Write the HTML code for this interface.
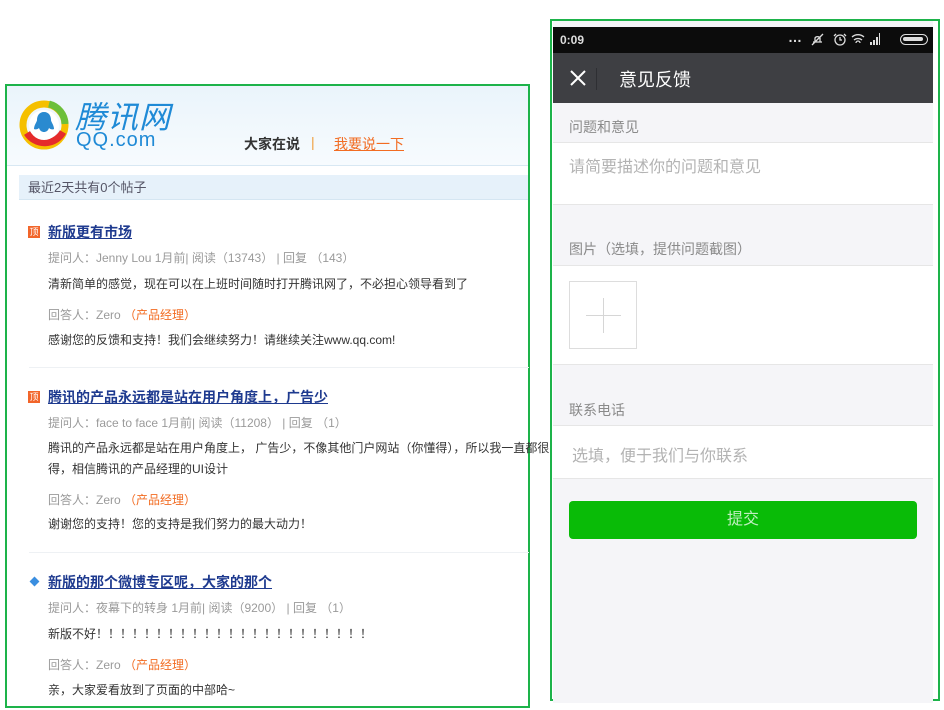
<!DOCTYPE html>
<html><head><meta charset="utf-8"><style>
*{margin:0;padding:0;box-sizing:border-box}
body{width:944px;height:710px;background:#fff;position:relative;overflow:hidden;font-family:"Liberation Sans","Noto Sans CJK SC",sans-serif;}
.abs{position:absolute;white-space:nowrap}
#left{position:absolute;left:5px;top:84px;width:525px;height:624px;border:2px solid #1db34a;background:#fff}
.hdr{position:absolute;left:0;top:0;width:521px;height:80px;background:linear-gradient(180deg,#eaf4fb,#f7fbfe);border-bottom:1px solid #d8e8f3}
.t{font-size:14px;font-weight:bold;color:#1e3a8f;text-decoration:underline}
.m{font-size:12px;color:#9a9a9a}
.c{font-size:12px;color:#333}
.o{color:#f26c22}
.tag{position:absolute;width:12px;height:12px;background:#f2652a;color:#fff;font-size:9px;line-height:12px;text-align:center}
.sep{position:absolute;left:22px;width:500px;height:1px;background:#eef1f4}
#right{position:absolute;left:550px;top:19px;width:390px;height:682px;border:2px solid #1db34a;background:#fff}
.ph{position:absolute;left:1px;width:380px}
.lbl{font-size:14px;color:#8a8a8a}
.ph2{font-size:16px;color:#b3b3b3}
</style></head><body>
<div id="left">
 <div class="hdr"></div>
 <svg class="abs" style="left:12px;top:14px" width="50" height="50" viewBox="0 0 50 50">
  <circle cx="25" cy="25" r="21" fill="none" stroke="#f5c000" stroke-width="7"/>
  <path d="M8 33 A21 21 0 0 0 44 32" fill="none" stroke="#e52b2b" stroke-width="7"/>
  <path d="M30 4 A21 21 0 0 1 46 24" fill="none" stroke="#6cbf3a" stroke-width="7"/>
  <circle cx="25" cy="25" r="15" fill="#fff"/>
  <path d="M25 12c-5 0-7 4-7 8 0 2-3 5-3 9 2 1 4 0 5-1 1 3 3 4 5 4s4-1 5-4c1 1 3 2 5 1 0-4-3-7-3-9 0-4-2-8-7-8z" fill="#2a8ad0"/>
 </svg>
 <div class="abs" style="left:68px;top:16px;font-size:31px;line-height:1;font-style:italic;color:#1f8ad6;letter-spacing:1px">腾讯网</div>
 <div class="abs" style="left:69px;top:44px;font-size:20px;line-height:1;color:#1f8ad6;letter-spacing:1px">QQ.com</div>
 <div class="abs" style="left:237px;top:48px;font-size:14px;font-weight:bold;color:#333">大家在说</div>
 <div class="abs" style="left:304px;top:48px;font-size:14px;color:#f0a040">|</div>
 <div class="abs" style="left:327px;top:48px;font-size:14px;color:#f26c22;text-decoration:underline">我要说一下</div>
 <div class="abs" style="left:12px;top:89px;width:509px;height:25px;background:#e6f1fa;border-bottom:1px solid #d5e6f2;font-size:13px;color:#556;line-height:25px;padding-left:9px">最近2天共有0个帖子</div>

 <div class="tag" style="left:21px;top:140px">顶</div>
 <div class="abs t" style="left:41px;top:136px">新版更有市场</div>
 <div class="abs m" style="left:41px;top:163px">提问人：Jenny Lou 1月前| 阅读（13743） | 回复 （143）</div>
 <div class="abs c" style="left:41px;top:189px">清新简单的感觉，现在可以在上班时间随时打开腾讯网了，不必担心领导看到了</div>
 <div class="abs m" style="left:41px;top:220px">回答人：Zero <span class="o">（产品经理）</span></div>
 <div class="abs c" style="left:41px;top:245px">感谢您的反馈和支持！我们会继续努力！请继续关注www.qq.com!</div>
 <div class="sep" style="top:281px"></div>

 <div class="tag" style="left:21px;top:305px">顶</div>
 <div class="abs t" style="left:41px;top:301px">腾讯的产品永远都是站在用户角度上，广告少</div>
 <div class="abs m" style="left:41px;top:328px">提问人：face to face 1月前| 阅读（11208） | 回复 （1）</div>
 <div class="abs c" style="left:41px;top:353px">腾讯的产品永远都是站在用户角度上， 广告少，不像其他门户网站（你懂得），所以我一直都很喜欢</div>
 <div class="abs c" style="left:41px;top:374px">得，相信腾讯的产品经理的UI设计</div>
 <div class="abs m" style="left:41px;top:405px">回答人：Zero <span class="o">（产品经理）</span></div>
 <div class="abs c" style="left:41px;top:429px">谢谢您的支持！您的支持是我们努力的最大动力！</div>
 <div class="sep" style="top:466px"></div>

 <div class="abs" style="left:24px;top:492px;width:7px;height:7px;background:#3a8ee0;transform:rotate(45deg)"></div>
 <div class="abs t" style="left:41px;top:486px">新版的那个微博专区呢，大家的那个</div>
 <div class="abs m" style="left:41px;top:513px">提问人：夜幕下的转身 1月前| 阅读（9200） | 回复 （1）</div>
 <div class="abs c" style="left:41px;top:539px">新版不好！！！！！！！！！！！！！！！！！！！！！！！</div>
 <div class="abs m" style="left:41px;top:570px">回答人：Zero <span class="o">（产品经理）</span></div>
 <div class="abs c" style="left:41px;top:595px">亲，大家爱看放到了页面的中部哈~</div>
</div>

<div id="right">
 <div class="ph" style="top:0;height:682px;background:#f5f5f8"></div>
 <div class="ph" style="top:6px;height:26px;background:#0c0c0c"></div>
 <div class="abs" style="left:8px;top:12px;font-size:12px;color:#ddd;font-weight:bold">0:09</div>
 <div class="abs" style="left:236px;top:8px;font-size:14px;color:#ddd;font-weight:bold">…</div>
 <svg class="abs" style="left:258px;top:11px" width="70" height="14" viewBox="0 0 70 14">
  <g fill="none" stroke="#ddd" stroke-width="1.3">
   <path d="M3 10h9M5 10V6a3 3 0 0 1 5 0v4M2 13L13 2"/>
   <circle cx="30" cy="8" r="5"/><path d="M30 5v3h2M26 2l-2 2M34 2l2 2"/>
   <path d="M42 5a9 9 0 0 1 12 0M44 8a6 6 0 0 1 8 0M46 11a2 2 0 0 1 4 0"/>
  </g>
  <g fill="#ddd"><rect x="60" y="10" width="2" height="3"/><rect x="63" y="8" width="2" height="5"/><rect x="66" y="5" width="2" height="8"/><rect x="69" y="1" width="1.5" height="12"/></g>
 </svg>
 <div class="abs" style="left:348px;top:13px;width:28px;height:11px;border:1.5px solid #ddd;border-radius:6px"><div style="margin:2px;width:20px;height:4px;background:#ddd;border-radius:2px"></div></div>
 <div class="ph" style="top:32px;height:50px;background:#3e3f43"></div>
 <svg class="abs" style="left:17px;top:48px" width="18" height="18" viewBox="0 0 18 18"><path d="M2 2L16 16M16 2L2 16" stroke="#fff" stroke-width="2"/></svg>
 <div class="abs" style="left:44px;top:47px;width:1px;height:22px;background:#2e2f33"></div>
 <div class="abs" style="left:67px;top:45px;font-size:18px;color:#fff">意见反馈</div>
 <div class="abs lbl" style="left:17px;top:96px">问题和意见</div>
 <div class="ph" style="top:121px;height:63px;background:#fff;border-top:1px solid #e6e6e6;border-bottom:1px solid #e6e6e6"></div>
 <div class="abs ph2" style="left:17px;top:132px">请简要描述你的问题和意见</div>
 <div class="abs lbl" style="left:17px;top:218px">图片（选填，提供问题截图）</div>
 <div class="ph" style="top:244px;height:100px;background:#fff;border-top:1px solid #e6e6e6;border-bottom:1px solid #e6e6e6"></div>
 <div class="abs" style="left:17px;top:260px;width:68px;height:68px;border:1px solid #ddd"></div>
 <div class="abs" style="left:34px;top:294px;width:35px;height:1px;background:#d6d6d6"></div>
 <div class="abs" style="left:51px;top:277px;width:1px;height:35px;background:#d6d6d6"></div>
 <div class="abs lbl" style="left:17px;top:379px">联系电话</div>
 <div class="ph" style="top:404px;height:54px;background:#fff;border-top:1px solid #e6e6e6;border-bottom:1px solid #e6e6e6"></div>
 <div class="abs ph2" style="left:20px;top:421px">选填，便于我们与你联系</div>
 <div class="abs" style="left:17px;top:480px;width:348px;height:38px;background:#09bb07;border-radius:4px;color:#bfeebf;font-size:16px;text-align:center;line-height:38px">提交</div>
</div>
</body></html>
